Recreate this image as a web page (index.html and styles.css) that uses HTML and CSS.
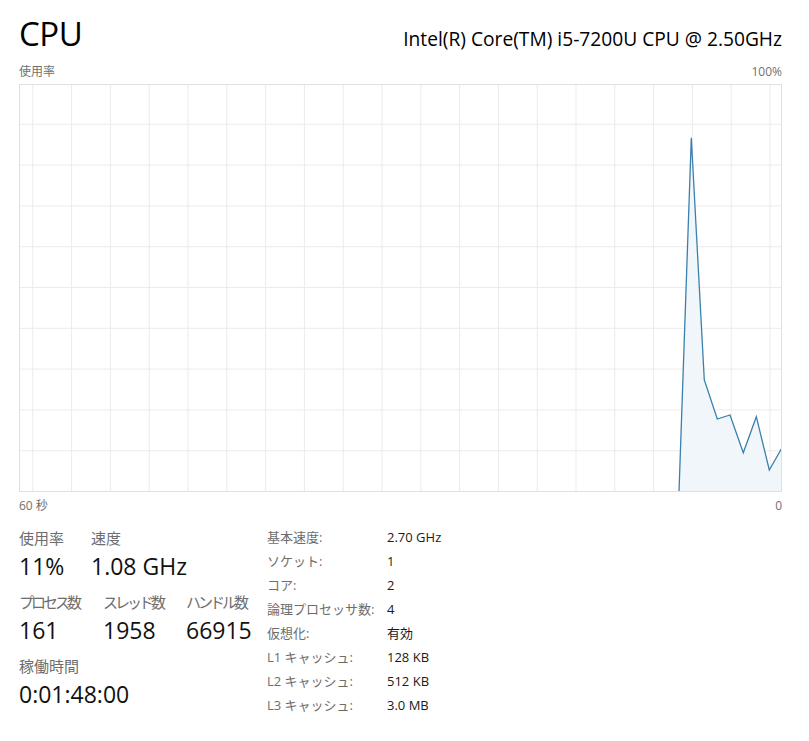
FILE: index.html
```html
<!DOCTYPE html>
<html lang="ja">
<head>
    <meta charset="UTF-8">
    <title>CPU</title>
    <link rel="stylesheet" href="styles.css">
</head>
<body>
    <div class="panel">
        <div class="cabecera">
            <h1 class="titulo">CPU</h1>
            <div class="modelo">Intel(R) Core(TM) i5-7200U CPU @ 2.50GHz</div>
        </div>

        <div class="eje eje-sup">
            <span>使用率</span>
            <span>100%</span>
        </div>

        <!-- Gráfico de uso -->
        <svg class="grafico" width="763" height="408" viewBox="0 0 763 408">
            <defs>
                <pattern id="rejilla" patternUnits="userSpaceOnUse" x="13.3" y="0" width="38.8" height="40.8">
                    <path d="M0.5 0 V40.8 M0 40.3 H38.8" fill="none" stroke="#ebebeb" stroke-width="1"/>
                </pattern>
            </defs>
            <rect x="0" y="0" width="763" height="408" fill="url(#rejilla)"/>
            <polygon points="660,408 672.3,53.7 685.3,296 698.3,335 711,331 724.3,368.7 737.3,332.7 750.3,386 762.7,364.3 763,408" fill="#f1f6fa"/>
            <polyline points="660,408 672.3,53.7 685.3,296 698.3,335 711,331 724.3,368.7 737.3,332.7 750.3,386 762.7,364.3" fill="none" stroke="#3a80ad" stroke-width="1.3" stroke-linejoin="miter"/>
            <rect x="0.5" y="0.5" width="762" height="407" fill="none" stroke="#e0e0e0" stroke-width="1"/>
        </svg>

        <div class="eje eje-inf">
            <span>60 秒</span>
            <span>0</span>
        </div>

        <div class="detalles">
            <div class="resumen">
                <div class="fila">
                    <div class="dato ancho-uso">
                        <div class="etiqueta">使用率</div>
                        <div class="valor">11%</div>
                    </div>
                    <div class="dato">
                        <div class="etiqueta">速度</div>
                        <div class="valor">1.08 GHz</div>
                    </div>
                </div>
                <div class="fila">
                    <div class="dato ancho-proc">
                        <div class="etiqueta kana">プロセス数</div>
                        <div class="valor">161</div>
                    </div>
                    <div class="dato ancho-hilos">
                        <div class="etiqueta kana">スレッド数</div>
                        <div class="valor">1958</div>
                    </div>
                    <div class="dato">
                        <div class="etiqueta kana">ハンドル数</div>
                        <div class="valor">66915</div>
                    </div>
                </div>
                <div class="fila">
                    <div class="dato">
                        <div class="etiqueta">稼働時間</div>
                        <div class="valor">0:01:48:00</div>
                    </div>
                </div>
            </div>

            <dl class="tabla">
                <dt>基本速度:</dt><dd>2.70 GHz</dd>
                <dt>ソケット:</dt><dd>1</dd>
                <dt>コア:</dt><dd>2</dd>
                <dt>論理プロセッサ数:</dt><dd>4</dd>
                <dt>仮想化:</dt><dd>有効</dd>
                <dt>L1 キャッシュ:</dt><dd>128 KB</dd>
                <dt>L2 キャッシュ:</dt><dd>512 KB</dd>
                <dt>L3 キャッシュ:</dt><dd>3.0 MB</dd>
            </dl>
        </div>
    </div>
</body>
</html>
```

FILE: styles.css
```css
/* Administrador de tareas - CPU */
body {
    margin: 0;
    padding: 0;
    background-color: #ffffff;
    color: #1a1a1a;
    font-family: "Open Sans", "Noto Sans CJK JP", sans-serif;
}
.panel {
    width: 763px;
    padding: 0 0 0 19px;
}
.cabecera {
    display: flex;
    justify-content: space-between;
    align-items: baseline;
    height: 62px;
}
.titulo {
    margin: 0;
    padding-top: 5px;
    font-weight: 400;
    font-size: 33px;
    line-height: 57px;
    letter-spacing: -0.5px;
    color: #000000;
}
.modelo {
    font-size: 19.2px;
    color: #000000;
}
.eje {
    display: flex;
    justify-content: space-between;
    font-size: 12px;
    color: #707070;
}
.eje-sup {
    height: 22px;
    line-height: 20px;
}
.grafico {
    display: block;
}
.eje-inf {
    height: 32px;
    line-height: 28px;
}
.detalles {
    display: flex;
}
.resumen {
    width: 248px;
    padding-top: 3px;
}
.fila {
    display: flex;
    margin-bottom: 7px;
}
.ancho-uso {
    width: 72px;
}
.ancho-proc {
    width: 84px;
}
.ancho-hilos {
    width: 83px;
}
.etiqueta {
    font-family: "Noto Sans CJK JP", sans-serif;
    font-size: 15px;
    line-height: 22px;
    color: #6d6d6d;
}
/* katakana mas estrecha */
.etiqueta.kana {
    letter-spacing: -3px;
}
.valor {
    font-size: 23px;
    line-height: 35px;
    color: #111111;
}
.tabla {
    display: grid;
    grid-template-columns: 120px auto;
    grid-auto-rows: 24px;
    margin: 1px 0 0;
    font-size: 13px;
    line-height: 24px;
}
.tabla dt {
    color: #6d6d6d;
}
.tabla dd {
    margin: 0;
    color: #1a1a1a;
}
```
